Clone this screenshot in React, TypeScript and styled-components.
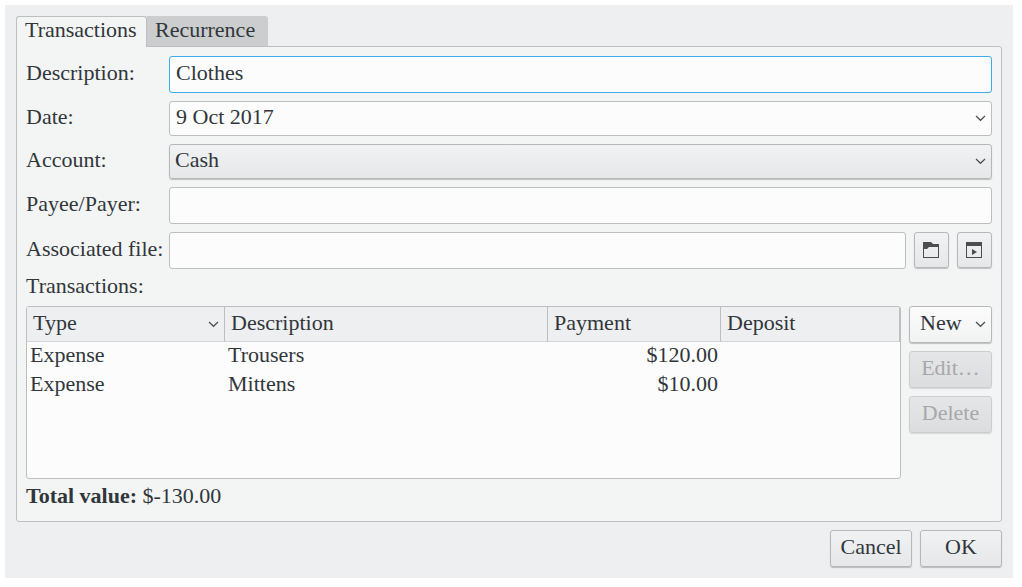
import React, { useState } from "react";
import styled, { createGlobalStyle, css } from "styled-components";

const color = {
  window: "#eeeff1",
  page: "#f3f5f4",
  field: "#fcfcfc",
  line: "#bcbebf",
  text: "#31363b",
  faded: "#a6a8ab",
  focus: "#3daee9",
};

const GlobalStyle = createGlobalStyle`
  * { box-sizing: border-box; }
  body {
    margin: 0;
    background: #ffffff;
    color: ${color.text};
    font: 22px/25px "Liberation Serif", serif;
  }
  button, input, select { font: inherit; color: inherit; margin: 0; }
`;

const Dialog = styled.main`
  margin: 5px 9px 9px 5px;
  padding: 11px;
  background: ${color.window};
`;

const TabBar = styled.div`
  display: flex;
  align-items: flex-start;
`;

const Tab = styled.button<{ $active: boolean }>`
  min-width: 121px;
  height: 30px;
  padding: 0 8px 4px;
  border: 0;
  border-radius: 0 3px 0 0;
  background: #cccdce;
  text-align: left;
  white-space: nowrap;
  ${(p) =>
    p.$active &&
    css`
      position: relative;
      min-width: 131px;
      height: 31px;
      margin-bottom: -1px;
      border: 1px solid ${color.line};
      border-bottom: 0;
      border-radius: 3px 3px 0 0;
      background: ${color.page};
      padding: 0 8px 6px;
    `}
`;

const Page = styled.section`
  padding: 9px 9px 5px;
  border: 1px solid ${color.line};
  border-radius: 0 3px 3px 3px;
  background: ${color.page};
`;

const Form = styled.form`
  display: grid;
  grid-template-columns: 137px minmax(0, 1fr);
  gap: 8px 6px;
  align-items: center;
`;

const Label = styled.label`
  padding-bottom: 4px;
  white-space: nowrap;
`;

const fieldBox = css`
  width: 100%;
  min-width: 0;
  padding: 0 6px 4px;
  border: 1px solid ${color.line};
  border-radius: 3px;
  background: ${color.field};
  outline: none;
`;

const TextField = styled.input<{ $focused?: boolean }>`
  ${fieldBox}
  height: 37px;
  border-color: ${(p) => (p.$focused ? color.focus : color.line)};
`;

const SelectBox = styled.div`
  display: grid;
  align-items: center;
  > * { grid-area: 1 / 1; }
  > svg {
    justify-self: end;
    margin-right: 6px;
    pointer-events: none;
  }
`;

const raised = css`
  border: 1px solid #b5b7b8;
  border-radius: 3px;
  background: linear-gradient(#f1f2f3, #e6e7e9);
  box-shadow: 0 1px 1px rgba(0, 0, 0, 0.22);
`;

const Select = styled.select<{ $raised?: boolean }>`
  ${fieldBox}
  height: 35px;
  appearance: none;
  ${(p) => p.$raised && css`${raised} padding-left: 5px;`}
`;

const FileRow = styled.div`
  display: flex;
  gap: 8px;
`;

const IconButton = styled.button`
  ${raised}
  flex: none;
  display: grid;
  place-items: center;
  width: 35px;
  height: 36px;
  padding: 0 1px 0 0;
`;

const Line = styled.p`
  margin: 0;
  padding: 4px 0 8px;
`;

const Split = styled.div`
  display: flex;
  align-items: flex-start;
  gap: 8px;
`;

const TableFrame = styled.div`
  flex: 1;
  min-width: 0;
  min-height: 173px;
  border: 1px solid ${color.line};
  border-radius: 3px;
  background: ${color.field};
`;

const Table = styled.table`
  width: 100%;
  table-layout: fixed;
  border-collapse: separate;
  border-spacing: 0;
`;

const HeadCell = styled.th<{ $width?: number }>`
  width: ${(p) => (p.$width ? `${p.$width}px` : "auto")};
  height: 35px;
  padding: 0 6px 4px;
  border-right: 1px solid ${color.line};
  border-bottom: 1px solid #d3d5d6;
  background: ${color.window};
  font-weight: normal;
  text-align: left;
`;

const SortLabel = styled.span`
  display: flex;
  align-items: center;
  justify-content: space-between;
  > svg { margin: 4px -1px 0 0; }
`;

const Cell = styled.td<{ $number?: boolean }>`
  height: 29px;
  padding: 0 3px 4px;
  text-align: ${(p) => (p.$number ? "right" : "left")};
`;

const Side = styled.div`
  flex: none;
  display: flex;
  flex-direction: column;
  gap: 8px;
  width: 83px;
`;

const Button = styled.button<{ $light?: boolean }>`
  ${raised}
  width: 82px;
  height: 37px;
  padding: 0 0 4px;
  ${(p) => p.$light && css`background: linear-gradient(#fcfcfc, #f1f2f2);`}
  ${Side} & { width: 100%; }
  &:disabled {
    border-color: #cbcdce;
    background: linear-gradient(#e5e6e8, #dcdddf);
    box-shadow: 0 1px 1px rgba(0, 0, 0, 0.12);
    color: ${color.faded};
  }
`;

const MenuLabel = styled.span`
  display: flex;
  align-items: center;
  justify-content: space-between;
  padding: 0 5px 0 10px;
  > svg { margin-top: 3px; }
`;

const Footer = styled.footer`
  display: flex;
  justify-content: flex-end;
  gap: 8px;
  margin-top: 8px;
`;

const Chevron = () => (
  <svg width="11" height="7" viewBox="0 0 11 7" fill="none" stroke="#4d4f52" strokeWidth="1.2" aria-hidden="true">
    <path d="M1 1 5.5 5.3 10 1" />
  </svg>
);

const FolderIcon = () => (
  <svg width="16" height="16" viewBox="0 0 16 16" fill="#4d4d4d" aria-hidden="true">
    <path fillRule="evenodd" d="M0 0H8L10 2H16V16H0ZM1 7V15H15V5H6L4 7Z" />
  </svg>
);

const OpenWithIcon = () => (
  <svg width="16" height="16" viewBox="0 0 16 16" fill="#4d4d4d" aria-hidden="true">
    <path fillRule="evenodd" d="M0 0H16V16H0ZM1 4V15H15V4Z" />
    <path d="M6 7V13L11 10Z" />
  </svg>
);

const splits = [
  { type: "Expense", description: "Trousers", payment: "$120.00", deposit: "" },
  { type: "Expense", description: "Mittens", payment: "$10.00", deposit: "" },
];

export default function App() {
  const [description, setDescription] = useState("Clothes");

  return (
    <>
      <GlobalStyle />
      <Dialog>
        <TabBar role="tablist">
          <Tab type="button" role="tab" aria-selected="true" $active>Transactions</Tab>
          <Tab type="button" role="tab" aria-selected="false" $active={false}>Recurrence</Tab>
        </TabBar>
        <Page role="tabpanel">
          <Form onSubmit={(e) => e.preventDefault()}>
            <Label htmlFor="description">Description:</Label>
            <TextField id="description" $focused value={description} onChange={(e) => setDescription(e.target.value)} />

            <Label htmlFor="date">Date:</Label>
            <SelectBox>
              <Select id="date"><option>9 Oct 2017</option></Select>
              <Chevron />
            </SelectBox>

            <Label htmlFor="account">Account:</Label>
            <SelectBox>
              <Select id="account" $raised><option>Cash</option></Select>
              <Chevron />
            </SelectBox>

            <Label htmlFor="payee">Payee/Payer:</Label>
            <TextField id="payee" />

            <Label htmlFor="file">Associated file:</Label>
            <FileRow>
              <TextField id="file" />
              <IconButton type="button" aria-label="Select file"><FolderIcon /></IconButton>
              <IconButton type="button" aria-label="Open file"><OpenWithIcon /></IconButton>
            </FileRow>
          </Form>

          <Line id="splits">Transactions:</Line>
          <Split>
            <TableFrame>
              <Table aria-labelledby="splits">
                <thead>
                  <tr>
                    <HeadCell $width={198} aria-sort="ascending"><SortLabel>Type<Chevron /></SortLabel></HeadCell>
                    <HeadCell>Description</HeadCell>
                    <HeadCell $width={173}>Payment</HeadCell>
                    <HeadCell $width={179}>Deposit</HeadCell>
                  </tr>
                </thead>
                <tbody>
                  {splits.map((s) => (
                    <tr key={s.description}>
                      <Cell>{s.type}</Cell>
                      <Cell>{s.description}</Cell>
                      <Cell $number>{s.payment}</Cell>
                      <Cell $number>{s.deposit}</Cell>
                    </tr>
                  ))}
                </tbody>
              </Table>
            </TableFrame>
            <Side>
              <Button type="button" $light aria-haspopup="menu"><MenuLabel>New<Chevron /></MenuLabel></Button>
              <Button type="button" disabled>Edit…</Button>
              <Button type="button" disabled>Delete</Button>
            </Side>
          </Split>
          <Line><b>Total value:</b> $-130.00</Line>
        </Page>
        <Footer>
          <Button type="button">Cancel</Button>
          <Button type="button">OK</Button>
        </Footer>
      </Dialog>
    </>
  );
}
